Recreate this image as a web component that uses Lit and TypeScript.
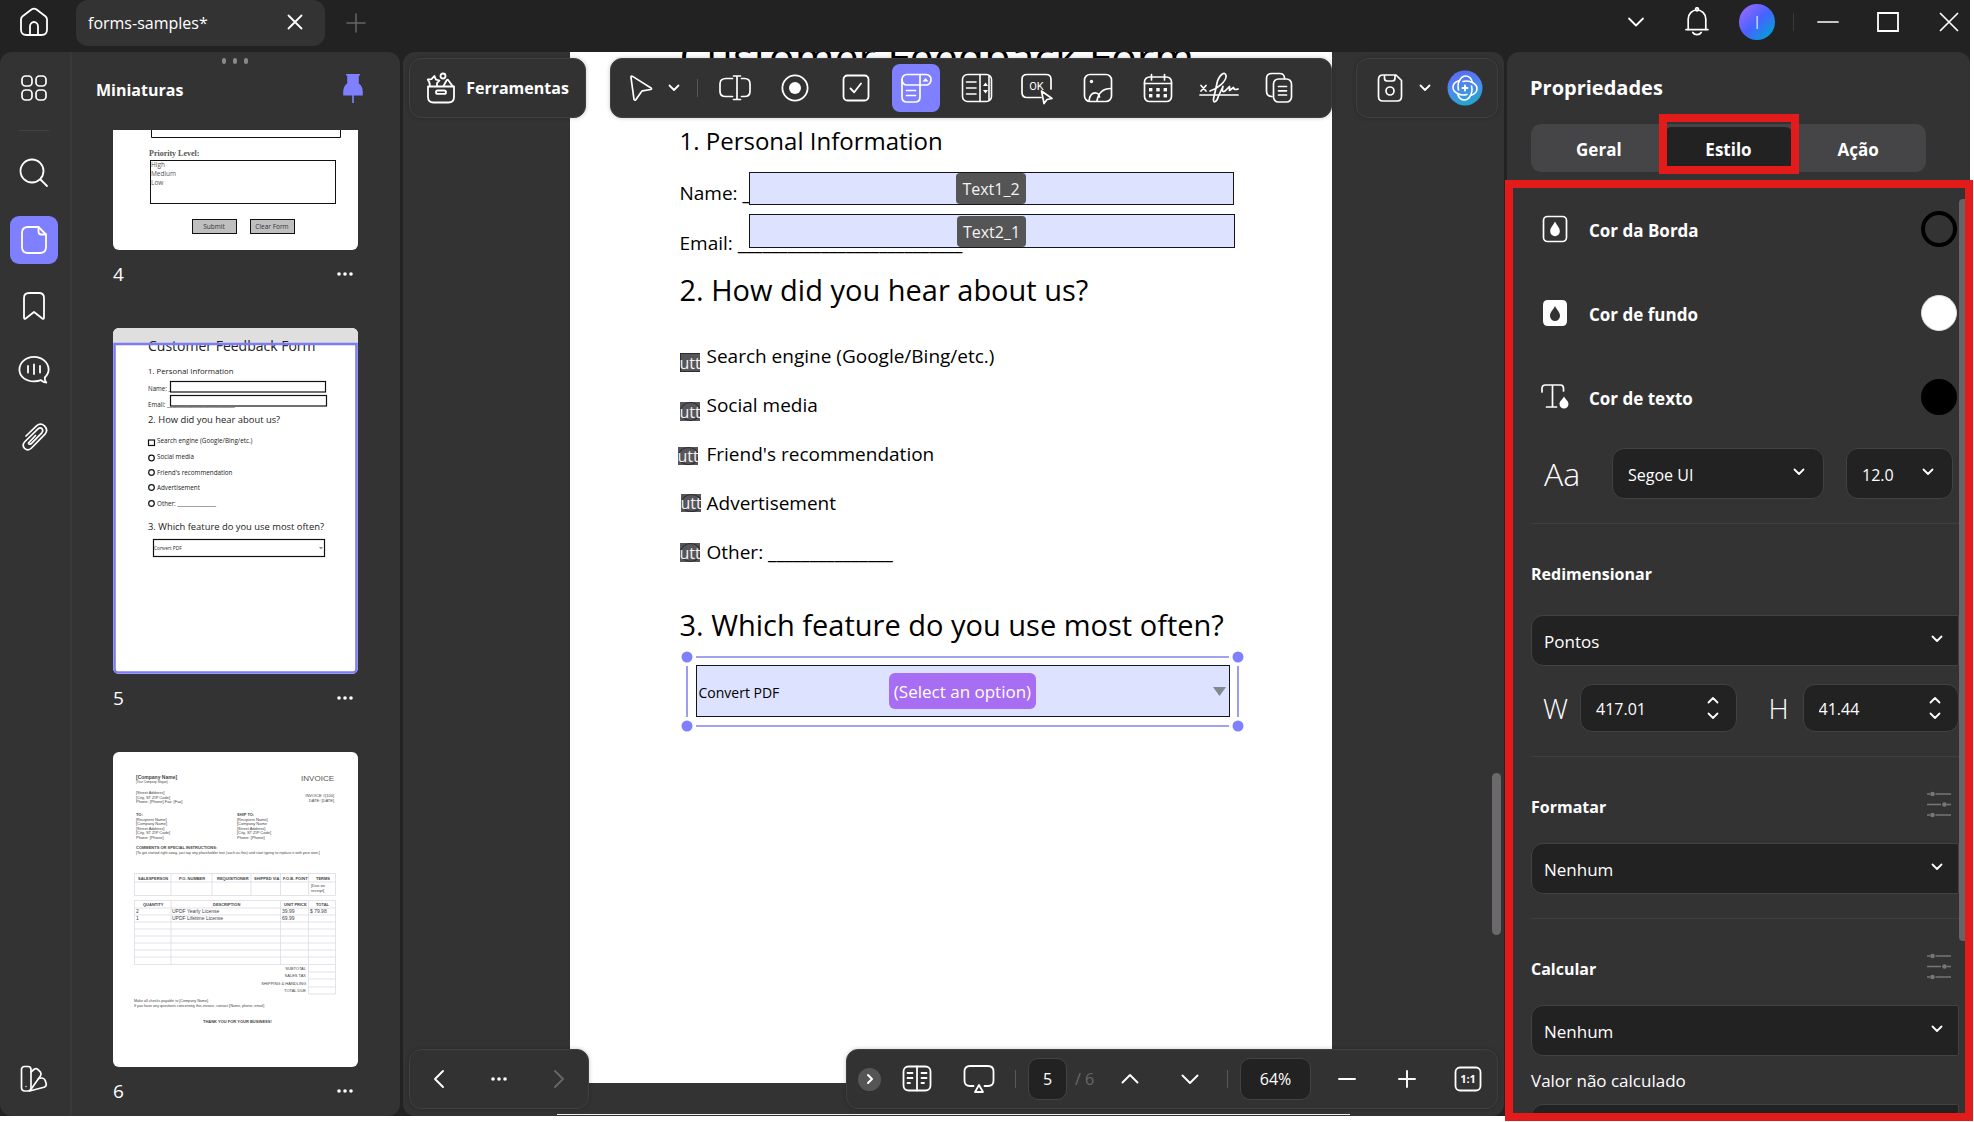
import { LitElement, html, css, svg, nothing, type TemplateResult, type SVGTemplateResult } from "lit";
import { customElement, property, state } from "lit/decorators.js";
import { classMap } from "lit/directives/class-map.js";
import { styleMap } from "lit/directives/style-map.js";

const icon = (w: number, h: number, body: SVGTemplateResult, stroke = 2) => html`<svg
  width=${w}
  height=${h}
  viewBox="0 0 ${w} ${h}"
  fill="none"
  stroke="currentColor"
  stroke-width=${stroke}
  stroke-linecap="round"
  stroke-linejoin="round"
  aria-hidden="true"
>${body}</svg>`;

const chevronDown = icon(14, 10, svg`<path d="M2.500 2.500 L7 7 L11.500 2.500"/>`, 1.8);
const chevronUp = icon(14, 10, svg`<path d="M2.500 7.500 L7 3 L11.500 7.500"/>`, 1.8);
const dots = icon(18, 6, svg`<g fill="currentColor" stroke="none"><circle cx="3" cy="3" r="1.800"/><circle cx="9" cy="3" r="1.800"/><circle cx="15" cy="3" r="1.800"/></g>`);

const icons: Record<string, TemplateResult> = {
  home: icon(30, 30, svg`<path d="M2 12.500 Q2 10.600 3.600 9.300 L12.800 2.300 Q15 .8 17.200 2.300 L26.400 9.300 Q28 10.600 28 12.500 V22.500 Q28 28 22.500 28 H7.500 Q2 28 2 22.500 Z"/><path d="M11 28 V19.500 A4 4.500 0 0 1 19 19.500 V28"/>`, 1.8),
  close: icon(16, 16, svg`<path d="M1.500 1.500 L14.500 14.500 M14.500 1.500 L1.500 14.500"/>`, 1.8),
  plus: icon(20, 20, svg`<path d="M10 1 V19 M1 10 H19"/>`, 1.5),
  chevronWide: icon(18, 12, svg`<path d="M2 2.500 L9 9.500 L16 2.500"/>`, 1.8),
  bell: icon(24, 30, svg`<path d="M3.200 22.500 V12 A8.800 9 0 0 1 20.800 12 V22.500"/><path d="M1 22.600 H23"/><circle cx="12" cy="2.300" r="1.500"/><path d="M7.800 25.500 A4.600 3.600 0 0 0 16.200 25.500"/>`, 1.7),
  minimize: icon(22, 4, svg`<path d="M1 2 H21"/>`, 1.7),
  maximize: icon(22, 20, svg`<path d="M1 1 H21 V19 H1 Z" stroke-linejoin="miter"/>`, 1.8),
  closeBig: icon(20, 20, svg`<path d="M1.500 1.500 L18.500 18.500 M18.500 1.500 L1.500 18.500"/>`, 1.7),
  grid: icon(26, 26, svg`<rect x="1" y="1" width="10" height="10" rx="3.500"/><rect x="15" y="1" width="10" height="10" rx="3.500"/><rect x="1" y="15" width="10" height="10" rx="3.500"/><rect x="15" y="15" width="10" height="10" rx="3.500"/>`, 1.7),
  search: icon(30, 30, svg`<circle cx="13" cy="13" r="11.500"/><path d="M21.500 21.500 L28 28"/>`, 1.8),
  page: icon(28, 30, svg`<path d="M8 2 H18.500 L26 9.500 V22 Q26 28 20 28 H8 Q2 28 2 22 V8 Q2 2 8 2 Z"/><path d="M18.500 2 V6.500 Q18.500 9.500 21.500 9.500 H26"/>`, 1.8),
  bookmark: icon(24, 30, svg`<path d="M2 26.500 V7 Q2 2 7 2 H17 Q22 2 22 7 V26.500 Q22 28.600 20.300 27.500 L12 21 L3.700 27.500 Q2 28.600 2 26.500 Z"/>`, 1.8),
  comment: icon(32, 30, svg`<path d="M26.800 22.500 C29.300 20.200 30.600 17.600 30.600 14.600 C30.600 7.600 24.200 1.800 16 1.800 C7.800 1.800 1.400 7.600 1.400 14.600 C1.400 21.600 7.800 26.400 16 26.400 Q20 26.400 23 25.200 Q25.500 27.300 28.300 27.600 Q26.300 25 26.800 22.500 Z"/><path d="M10 11 V17.500 M16 9.500 V19 M22 11 V17.500"/>`, 1.8),
  clip: icon(28, 30, svg`<path d="M5 14 L15.500 3.800 Q19.500 .5 23.500 3.800 Q27.500 8 24 12.200 L10.500 26 Q7 29.500 3.600 26.400 Q.5 23 4 19.500 L17 6.800 Q19.300 5 21 6.700 Q22.600 8.600 20.800 10.800 L10 21.800 Q8 23 7.500 21 L14.500 13.500" transform="translate(1 0)"/>`, 1.7),
  swatches: icon(28, 28, svg`<rect x="1.500" y="1.500" width="9.500" height="24.500" rx="3"/><path d="M11 7 L14.500 4 Q16.500 3 18 4.600 L20.500 7.200 Q21.800 9 20.400 11 L10.500 25"/><path d="M18.500 13.500 L21.500 13 Q24 12.800 25 15 L26.200 18.500 Q26.800 21.300 24 22.300 L9.500 26"/><circle cx="6" cy="21.500" r=".7" fill="currentColor" stroke="none"/>`, 1.7),
  pin: icon(22, 30, svg`<g fill="currentColor" stroke="none"><path d="M4 0 H18 V1.500 H16.800 V9.500 Q20.800 12 20.800 18 V21.500 H1.200 V18 Q1.200 12 5.200 9.500 V1.500 H4 Z"/><rect x="10.200" y="21" width="1.600" height="8"/></g>`),
  toolbox: icon(30, 32, svg`<path d="M2 14.500 H28 V25 Q28 30.500 22.500 30.500 H7.500 Q2 30.500 2 25 Z"/><rect x="10" y="18.500" width="10" height="3.400" rx="1.700"/><path d="M4 14 L3.400 10.500 L1.800 7.500 L5.500 7.200 L8.300 4 L10 7.600 L13.500 8.500 L11 11.200 L11 14"/><circle cx="17" cy="4" r="2.500"/><path d="M17.500 14 L20.500 8.500 Q21.500 7 22.500 8.500 L26.500 14"/>`, 1.8),
  cursor: icon(24, 28, svg`<path d="M2 3.500 Q1.800 1.400 3.600 2.400 L22 14 Q23.200 15 21.800 15.500 L13.500 16.800 Q12.800 17 12.400 17.700 L7 25.600 Q5.700 27 5 25.300 Z"/>`, 1.7),
  textfield: icon(34, 28, svg`<path d="M14.500 4.500 H8 Q2 4.500 2 10 V17.500 Q2 22.500 7.500 22.500 H14.500"/><path d="M23.500 4.500 H26.500 Q32 4.500 32 10 V17.500 Q32 22.500 26.500 22.500 H23.500"/><path d="M19 2 V25.500 M15.500 2 H22.500 M15.500 25.500 H22.500"/>`, 1.7),
  radio: icon(28, 28, svg`<circle cx="14" cy="14" r="12.600"/><circle cx="14" cy="14" r="6" fill="currentColor" stroke="none"/>`, 1.8),
  checkbox: icon(28, 28, svg`<rect x="1.500" y="1.500" width="25" height="25" rx="4"/><path d="M8.500 14.500 L12.200 18.300 L19 9.500"/>`, 1.8),
  dropdown: icon(32, 32, svg`<rect x="2" y="2.500" width="29" height="10.500" rx="5"/><path d="M2 7.500 V25 Q2 30 7 30 H15 Q20 30 20 25 V2.500 M6.500 18.500 H15.500 M6.500 23.500 H15.500"/><path d="M22.500 9.500 L25.500 6 L28.500 9.500 Z" fill="currentColor" stroke="none"/>`, 1.7),
  list: icon(32, 30, svg`<rect x="1.500" y="1.500" width="29" height="27" rx="5"/><path d="M19 1.500 V28.500 M5.500 9 H15 M5.500 15 H15 M5.500 21 H15 M28 3 V27"/><path d="M22 13 L24.500 9.500 L27 13 Z M22 17 L24.500 20.500 L27 17 Z" fill="currentColor" stroke="none"/>`, 1.6),
  ok: icon(34, 34, svg`<path d="M21 26.500 H7 Q2 26.500 2 21.500 V8.500 Q2 3.500 7 3.500 H26 Q31 3.500 31 8.500 V18"/><text x="16.500" y="19" font-size="11" font-weight="400" text-anchor="middle" fill="currentColor" stroke="none" font-family="Roboto, sans-serif">OK</text><path d="M21.500 20 L32 27.500 L27 28.500 L24 32.500 Z" fill="#333233"/>`, 1.7),
  image: icon(30, 30, svg`<rect x="1.500" y="1.500" width="27" height="27" rx="5.500"/><circle cx="8.500" cy="8.500" r="1.700" fill="currentColor" stroke="none"/><path d="M6 28 Q7 19.500 13 20 Q16 20.300 16.500 24 M14 28 Q16 15.500 28 15.500"/>`, 1.7),
  calendar: icon(30, 30, svg`<rect x="1.500" y="4" width="27" height="24.500" rx="5"/><path d="M1.500 10.500 H28.500 M8.500 1.500 V7 M21.500 1.500 V7"/><g fill="currentColor" stroke="none"><rect x="6" y="15" width="3.400" height="3.400"/><rect x="13.300" y="15" width="3.400" height="3.400"/><rect x="20.600" y="15" width="3.400" height="3.400"/><rect x="6" y="21" width="3.400" height="3.400"/><rect x="13.300" y="21" width="3.400" height="3.400"/><rect x="20.600" y="21" width="3.400" height="3.400"/></g>`, 1.7),
  sign: icon(40, 34, svg`<path d="M1 24 H39 M2 14.500 L7 20 M7 14.500 L2 20"/><path d="M11 20 C18 18 28 10 27 4.500 C26 0 21 3 18.500 10 L14.500 28 C14 33 18 31 19.500 25 L24 15.500 C22.500 20 24 22.500 27 19 L30.500 15.500 L30.500 19.500 L34.500 16.500 Q35 19.500 39 18"/>`, 1.7),
  copy: icon(28, 32, svg`<path d="M7 24.500 Q1.500 24.500 1.500 19 V6.500 Q1.500 1.500 7 1.500 H14.500 Q19.500 1.500 19.500 6.500"/><rect x="8.500" y="7" width="18" height="23" rx="5"/><path d="M13.500 14.500 H21.500 M13.500 18.800 H21.500 M13.500 23 H21.500"/>`, 1.7),
  save: icon(26, 30, svg`<path d="M5.500 2 H19 L24.500 7.500 V23.500 Q24.500 28 20 28 H6 Q1.500 28 1.500 23.500 V6.500 Q1.500 2 6 2 Z M7.500 2 V5 Q7.500 8 10 8 H15.500 Q18 8 18 5 V2"/><circle cx="13" cy="18" r="4"/>`, 1.7),
  arrowLeft: icon(12, 20, svg`<path d="M10 2 L2 10 L10 18"/>`, 1.9),
  arrowRight: icon(12, 20, svg`<path d="M2 2 L10 10 L2 18"/>`, 1.9),
  arrowSmall: icon(8, 12, svg`<path d="M2 2 L6 6 L2 10"/>`, 2),
  book: icon(30, 28, svg`<rect x="1.500" y="1.500" width="27" height="24" rx="5"/><path d="M15 1.500 V25.500 M5.500 8 H10.500 M5.500 13 H10.500 M5.500 18 H8 M19.500 8 H24.500 M19.500 13 H24.500 M19.500 18 H22"/>`, 1.8),
  screen: icon(32, 30, svg`<path d="M10.500 22 H7 Q1.500 22 1.500 16.500 V7.500 Q1.500 2 7 2 H25 Q30.500 2 30.500 7.500 V16.500 Q30.500 22 25 22 H21.500 M16 21 L20 28 H12 Z"/>`, 1.8),
  up: icon(18, 12, svg`<path d="M1.500 9.500 L9 2 L16.500 9.500"/>`, 1.9),
  down: icon(18, 12, svg`<path d="M1.500 2.500 L9 10 L16.500 2.500"/>`, 1.9),
  minus: icon(18, 4, svg`<path d="M1 2 H17"/>`, 1.9),
  add: icon(18, 18, svg`<path d="M9 1 V17 M1 9 H17"/>`, 1.9),
  actual: icon(28, 26, svg`<rect x="1.500" y="1.500" width="25" height="23" rx="4.500"/><text x="14" y="17" font-size="11" font-weight="700" text-anchor="middle" fill="currentColor" stroke="none" font-family="Open Sans, sans-serif">1:1</text>`, 1.8),
  borderColor: icon(26, 28, svg`<rect x="1.500" y="1.500" width="23" height="25" rx="4"/><path d="M13 6.500 C15 10.500 17.800 12.800 17.800 16.200 A4.800 5 0 0 1 8.200 16.200 C8.200 12.800 11 10.500 13 6.500 Z" fill="currentColor" stroke="none"/>`, 1.7),
  fillColor: icon(26, 28, svg`<path fill-rule="evenodd" d="M6 1 H20 Q25 1 25 6 V22 Q25 27 20 27 H6 Q1 27 1 22 V6 Q1 1 6 1 Z M13 7 C11 11 8 13.200 8 16.700 A5 5.200 0 0 0 18 16.700 C18 13.200 15 11 13 7 Z" fill="currentColor" stroke="none"/>`),
  textColor: icon(30, 28, svg`<path d="M2 9 V5.500 Q2 2 5.500 2 H20.500 Q23.500 2 23.500 5.500 V8 M12.500 2 V24 M6.500 24 H16.500"/><path d="M24 13.500 C25.500 16.500 28.500 18 28.500 21 A4.500 4.500 0 0 1 19.500 21 C19.500 18 22.500 16.500 24 13.500 Z" fill="currentColor" stroke="none"/>`, 1.7),
  sliders: icon(26, 28, svg`<path d="M1 3 H4 M9.500 3 H25 M1 13.500 H15 M21 13.500 H25 M1 24 H4 M9.500 24 H25" stroke-linecap="butt"/><g fill="currentColor" stroke="none"><circle cx="6.500" cy="3" r="2.300"/><circle cx="18.500" cy="13.500" r="2.300"/><circle cx="6.500" cy="24" r="2.300"/></g>`, 1.4),
};

const UI_FONT = css`"Open Sans", "Noto Sans", sans-serif`;

const base = css`
  * {
    box-sizing: border-box;
  }
  button,
  input,
  select {
    font: inherit;
    color: inherit;
    background: none;
    border: 0;
    margin: 0;
    padding: 0;
    outline: 0;
    appearance: none;
  }
  button {
    display: flex;
    align-items: center;
    justify-content: center;
    cursor: pointer;
  }
  svg {
    display: block;
    flex: none;
  }
`;

/* ---------- Title bar ---------- */
@customElement("title-bar")
class TitleBar extends LitElement {
  static styles = [
    base,
    css`
      :host {
        display: flex;
        height: 52px;
        background: #222;
        color: #fff;
      }
      .home {
        width: 68px;
        height: 46px;
        margin-right: 8px;
        padding-bottom: 2px;
      }
      .tab {
        display: flex;
        align-items: center;
        justify-content: space-between;
        width: 249px;
        height: 46px;
        padding: 0 22px 0 12px;
        border-radius: 12px;
        background: #343334;
        font-size: 16px;
      }
      .tab button {
        padding-bottom: 2px;
      }
      .new {
        width: 62px;
        height: 46px;
        color: #666;
      }
      .controls {
        display: flex;
        align-items: center;
        height: 44px;
        margin-left: auto;
        padding-right: 11px;
      }
      .menu {
        margin-right: 40px;
      }
      .bell {
        margin-right: 30px;
      }
      .avatar {
        width: 36px;
        height: 36px;
        border-radius: 50%;
        background: linear-gradient(135deg, #8b68ff 15%, #4763ff 50%, #00a0d8 90%);
        font-size: 18px;
        font-weight: 300;
      }
      .rule {
        width: 1px;
        height: 18px;
        margin: 0 23px 0 18px;
        background: #3a3a3a;
      }
      .min {
        margin-right: 38px;
      }
      .max {
        margin-right: 40px;
      }
    `,
  ];
  render() {
    return html`
      <button class="home" aria-label="Início">${icons.home}</button>
      <div class="tab"><span>forms-samples*</span><button aria-label="Fechar aba">${icons.close}</button></div>
      <button class="new" aria-label="Nova aba">${icons.plus}</button>
      <div class="controls">
        <button class="menu" aria-label="Mais">${icons.chevronWide}</button>
        <button class="bell" aria-label="Notificações">${icons.bell}</button>
        <button class="avatar" aria-label="Conta">I</button>
        <span class="rule"></span>
        <button class="min" aria-label="Minimizar">${icons.minimize}</button>
        <button class="max" aria-label="Maximizar">${icons.maximize}</button>
        <button aria-label="Fechar">${icons.closeBig}</button>
      </div>
    `;
  }
}

/* ---------- Page miniatures ---------- */
const thumbFour = html`<svg viewBox="0 0 245 120" width="245" height="120">
  <g fill="none" stroke="#111"><path d="M38.500 0 V7.500 H227.500 V0"/><rect x="37.500" y="30.500" width="185" height="43"/></g>
  <g fill="#c0bfc0" stroke="#111"><rect x="79.500" y="89.500" width="44" height="14"/><rect x="137.500" y="89.500" width="44" height="14"/></g>
  <g fill="#555"><text x="36" y="26" class="serif" font-size="8" font-weight="700">Priority Level:</text>
  <text x="38" y="37" font-size="6.500">High</text><text x="38" y="46" font-size="6.500">Medium</text><text x="38" y="55" font-size="6.500">Low</text></g>
  <g fill="#333" text-anchor="middle" font-size="6.500"><text x="101" y="99">Submit</text><text x="159" y="99">Clear Form</text></g>
</svg>`;

const miniOptions: [string, number][] = [
  ["Search engine (Google/Bing/etc.)", 115],
  ["Social media", 131],
  ["Friend's recommendation", 147],
  ["Advertisement", 162],
  ["Other: ______________", 178],
];

const thumbFive = html`<svg viewBox="0 0 245 346" width="245" height="346">
  <rect width="245" height="16" fill="#dfdfdf"/>
  <g fill="#222"><text x="35" y="23" font-size="14">Customer Feedback Form</text>
  <text x="35" y="46" font-size="7.800">1. Personal Information</text>
  <text x="35" y="63" font-size="6.200">Name: _</text><text x="35" y="79" font-size="6.200">Email: _________________________</text>
  <text x="35" y="95" font-size="9.400">2. How did you hear about us?</text>
  ${miniOptions.map(([t, y]) => svg`<text x="44" y=${y} font-size="6.300">${t}</text>`)}
  <text x="35" y="202" font-size="9.400">3. Which feature do you use most often?</text>
  <text x="41" y="222" font-size="4.800">Convert PDF</text></g>
  <g fill="#fff" stroke="#111" stroke-width="1.200"><rect x="57.500" y="53.500" width="155" height="10.500"/><rect x="57.500" y="67.500" width="156" height="10.500"/><rect x="35.500" y="112" width="6" height="5.500"/>
  ${[130, 144.5, 159.5, 175.5].map((y) => svg`<circle cx="38.500" cy=${y} r="2.800"/>`)}</g>
  <rect x="40.500" y="211.500" width="171" height="17" fill="none" stroke="#111" stroke-width="1.200"/>
  <path d="M206 219 H210 L208 221.500 Z" fill="#888"/>
  <path d="M1.500 16 H243.500 V341 Q243.500 344.500 240 344.500 H5 Q1.500 344.500 1.500 341 Z" fill="none" stroke="#7c7df3" stroke-width="2.600"/>
</svg>`;

type Line = [number, number, string, number?, boolean?];
const invoiceLines: Line[] = [
  [23, 27, "[Company Name]", 5, true],
  [23, 31, "[Your Company Slogan]", 3],
  [23, 42, "[Street Address]", 4], [23, 47, "[City, ST ZIP Code]", 4], [23, 51, "Phone: [Phone] Fax: [Fax]", 4],
  [23, 64, "TO:", 4, true], [23, 69, "[Recipient Name]", 4], [23, 73, "[Company Name]", 4], [23, 78, "[Street Address]", 4], [23, 82, "[City, ST ZIP Code]", 4], [23, 87, "Phone: [Phone]", 4],
  [124, 64, "SHIP TO:", 4, true], [124, 69, "[Recipient Name]", 4], [124, 73, "[Company Name", 4], [124, 78, "[Street Address]", 4], [124, 82, "[City, ST ZIP Code]", 4], [124, 87, "Phone: [Phone]", 4],
  [23, 97, "COMMENTS OR SPECIAL INSTRUCTIONS:", 4, true],
  [23, 102, "[To get started right away, just tap any placeholder text (such as this) and start typing to replace it with your own.]", 3.7],
  [25, 128, "SALESPERSON", 4, true], [66, 128, "P.O. NUMBER", 4, true], [104, 128, "REQUISITIONER", 4, true], [141, 128, "SHIPPED VIA", 4, true], [170, 128, "F.O.B. POINT", 4, true], [203, 128, "TERMS", 4, true],
  [198, 135, "[Due on", 4], [198, 140, "receipt]", 4],
  [30, 154, "QUANTITY", 4, true], [100, 154, "DESCRIPTION", 4, true], [171, 154, "UNIT PRICE", 4, true], [203, 154, "TOTAL", 4, true],
  [23, 161, "2", 5], [59, 161, "UPDF Yearly License", 5], [169, 161, "39.99", 5], [197, 161, "$ 79.98", 5],
  [23, 168, "1", 5], [59, 168, "UPDF Lifetime License", 5], [169, 168, "69.99", 5],
  [21, 250, "Make all checks payable to [Company Name]", 3.7],
  [21, 255, "If you have any questions concerning this invoice, contact [Name, phone, email]", 3.7],
  [90, 271, "THANK YOU FOR YOUR BUSINESS!", 4, true],
];

const thumbSix = html`<svg viewBox="0 0 245 315" width="245" height="315" font-family="Liberation Sans, sans-serif">
  <g fill="none" stroke="#dcdce4" stroke-width=".8">
    <rect x="21.500" y="121.500" width="201" height="22"/><path d="M21.500 130 H222.500 M58 121.500 V143.500 M99 121.500 V143.500 M138 121.500 V143.500 M167.500 121.500 V143.500 M195.500 121.500 V143.500"/>
    <rect x="21.500" y="148.500" width="201" height="64"/><path d="M58 148.500 V212.500 M167.500 148.500 V212.500 M195.500 148.500 V242 H222.500 V212.500"/>
    ${[156, 163, 170, 177, 184, 191, 198, 205].map((y) => svg`<path d="M21.500 ${y} H222.500"/>`)}
    ${[220, 227, 235].map((y) => svg`<path d="M195.500 ${y} H222.500"/>`)}
  </g>
  <g fill="#444">
    ${invoiceLines.map(([x, y, t, s = 4, b]) => svg`<text x=${x} y=${y} font-size=${s} font-weight=${b ? 700 : 400}>${t}</text>`)}
    <g text-anchor="end"><text x="221" y="29" font-size="8" fill="#555">INVOICE</text><text x="221" y="45" font-size="4">INVOICE #[100]</text><text x="221" y="50" font-size="4">DATE: [DATE]</text>
    <text x="193" y="218" font-size="4">SUBTOTAL</text><text x="193" y="225" font-size="4">SALES TAX</text><text x="193" y="233" font-size="4">SHIPPING &amp; HANDLING</text><text x="193" y="240" font-size="4">TOTAL DUE</text></g>
  </g>
</svg>`;

@customElement("thumbnail-panel")
class ThumbnailPanel extends LitElement {
  static styles = [
    base,
    css`
      :host {
        display: flex;
        min-height: 0;
        overflow: hidden;
        border-radius: 12px;
        background: #343334;
        color: #fff;
        font-size: 19px;
      }
      .rail {
        display: flex;
        flex-direction: column;
        align-items: center;
        width: 72px;
        padding: 12px 2px 13px 0;
        border-right: 2px solid #3a393a;
      }
      .rail button {
        width: 48px;
        height: 48px;
        border-radius: 9px;
        flex: none;
      }
      .rail .rule {
        width: 30px;
        height: 1px;
        margin: 18px 0;
        background: #434243;
      }
      .rail .search {
        margin-bottom: 19px;
      }
      .rail .on {
        background: #7f80ff;
        margin-bottom: 18px;
      }
      .rail .mark {
        margin-bottom: 16px;
      }
      .rail .talk {
        margin-bottom: 19px;
      }
      .rail .last {
        margin-top: auto;
      }
      .panel {
        display: flex;
        flex-direction: column;
        flex: 1;
        min-width: 0;
      }
      .grip {
        display: flex;
        justify-content: center;
        gap: 7px;
        padding: 6px 2px 8px 0;
      }
      .grip i {
        width: 4px;
        height: 6px;
        border-radius: 2px;
        background: #8a898a;
      }
      header {
        display: flex;
        align-items: center;
        justify-content: space-between;
        height: 36px;
        padding: 0 36px 0 24px;
      }
      h2 {
        margin: 0;
        font-size: 16px;
        font-weight: 700;
      }
      header button {
        color: #7f80ff;
        padding-bottom: 2px;
      }
      .list {
        flex: 1;
        min-height: 0;
        overflow: hidden;
        margin: 22px 0 0;
        padding: 0 41px;
        list-style: none;
      }
      .sheet {
        display: block;
        width: 245px;
        overflow: hidden;
        border-radius: 6px;
        background: #fff;
      }
      .first {
        border-top-left-radius: 0;
        border-top-right-radius: 0;
      }
      .serif {
        font-family: "Liberation Serif", serif;
      }
      .caption {
        display: flex;
        align-items: center;
        justify-content: space-between;
        height: 48px;
        margin-bottom: 30px;
        padding-right: 5px;
      }
    `,
  ];
  render() {
    const sheets: [number, TemplateResult][] = [[4, thumbFour], [5, thumbFive], [6, thumbSix]];
    return html`
      <nav class="rail" aria-label="Painéis">
        <button aria-label="Organizar">${icons.grid}</button>
        <span class="rule"></span>
        <button class="search" aria-label="Pesquisar">${icons.search}</button>
        <button class="on" aria-label="Miniaturas">${icons.page}</button>
        <button class="mark" aria-label="Marcadores">${icons.bookmark}</button>
        <button class="talk" aria-label="Comentários">${icons.comment}</button>
        <button aria-label="Anexos">${icons.clip}</button>
        <button class="last" aria-label="Temas">${icons.swatches}</button>
      </nav>
      <section class="panel">
        <div class="grip"><i></i><i></i><i></i></div>
        <header><h2>Miniaturas</h2><button aria-label="Fixar painel">${icons.pin}</button></header>
        <ul class="list">
          ${sheets.map(
            ([n, art]) => html`<li>
              <button class=${classMap({ sheet: true, first: n === 4 })} aria-label="Página ${n}">${art}</button>
              <div class="caption"><span>${n}</span><button aria-label="Opções da página ${n}">${dots}</button></div>
            </li>`
          )}
        </ul>
      </section>
    `;
  }
}

/* ---------- PDF page ---------- */
interface Field {
  kind: "text" | "check" | "radio";
  name: string;
  x: number;
  y: number;
  w: number;
  h: number;
}
const fields: Field[] = [
  { kind: "text", name: "Text1_2", x: 179, y: 120, w: 485, h: 33 },
  { kind: "text", name: "Text2_1", x: 179, y: 162, w: 486, h: 34 },
  { kind: "check", name: "utt", x: 110, y: 301, w: 20, h: 19 },
  { kind: "radio", name: "utt", x: 110, y: 350, w: 20, h: 19 },
  { kind: "radio", name: "utt", x: 108, y: 395, w: 20, h: 18 },
  { kind: "radio", name: "utt", x: 111, y: 442, w: 20, h: 18 },
  { kind: "radio", name: "utt", x: 110, y: 491, w: 20, h: 19 },
];

@customElement("pdf-page")
class PdfPage extends LitElement {
  static styles = [
    base,
    css`
      :host {
        display: block;
        position: relative;
        width: 762px;
        height: 1031px;
        padding-left: 110px;
        overflow: hidden;
        background: #fff;
        color: #000;
        white-space: nowrap;
        font-size: 19px;
      }
      h1,
      h2,
      h3,
      p {
        margin: 0;
        font-weight: 400;
      }
      h1 {
        margin-top: -28px;
        font-size: 43px;
        line-height: 66px;
      }
      h2 {
        margin-top: 35px;
        font-size: 24px;
        line-height: 32px;
      }
      .line {
        margin-top: 22px;
        line-height: 28px;
      }
      h3 {
        margin-top: 13px;
        font-size: 29px;
        line-height: 40px;
      }
      .options {
        margin: 22px 0 28px;
        padding: 0 0 0 27px;
        list-style: none;
        line-height: 49px;
      }
      .field {
        position: absolute;
        display: grid;
        place-items: center;
        overflow: hidden;
      }
      .field > * {
        grid-area: 1 / 1;
      }
      .field input {
        width: 100%;
        height: 100%;
      }
      .text input {
        border: 1px solid #14141c;
        background: #dde3ff;
      }
      .tag {
        padding: 2px 6px 0;
        border-radius: 4px;
        background: #555556;
        color: #f2f2f2;
        font-size: 16px;
        line-height: 29px;
        pointer-events: none;
      }
      .check,
      .radio {
        background: #56565a;
        color: #fff;
        font-size: 14px;
      }
      .check input {
        border: 1px solid #2c2c30;
      }
      .radio input {
        border: 1px solid #2c2c30;
        border-radius: 50%;
      }
      .check .tag,
      .radio .tag {
        padding: 0;
        background: none;
        line-height: 18px;
      }
      .selection {
        position: absolute;
        left: 117px;
        top: 605px;
        width: 551px;
        height: 69px;
      }
      .frame {
        position: absolute;
        inset: -6px;
      }
      .combo {
        position: absolute;
        inset: 8px 8px 9px 9px;
        display: grid;
        align-items: center;
        background: #dde3ff;
        border: 1px solid #14141c;
      }
      .combo > * {
        grid-area: 1 / 1;
      }
      .combo select {
        width: 100%;
        height: 100%;
        padding: 3px 0 0 2px;
        font-size: 14px;
      }
      .combo .label {
        justify-self: center;
        padding: 2px 5px 0;
        border-radius: 6px;
        background: #a76df2;
        color: #fff;
        font-size: 17px;
        line-height: 34px;
        pointer-events: none;
      }
      .combo .arrow {
        justify-self: end;
        margin-right: 3px;
        pointer-events: none;
      }
    `,
  ];
  render() {
    return html`
      <h1>Customer Feedback Form</h1>
      <h2>1. Personal Information</h2>
      <p class="line">Name: __________________</p>
      <p class="line">Email: ___________________________</p>
      <h3>2. How did you hear about us?</h3>
      <ul class="options">
        <li>Search engine (Google/Bing/etc.)</li>
        <li>Social media</li>
        <li>Friend's recommendation</li>
        <li>Advertisement</li>
        <li>Other: _______________</li>
      </ul>
      <h3>3. Which feature do you use most often?</h3>
      ${fields.map(
        (f) => html`<label
          class=${classMap({ field: true, [f.kind]: true })}
          style=${styleMap({ left: `${f.x}px`, top: `${f.y}px`, width: `${f.w}px`, height: `${f.h}px` })}
        >
          <input type=${f.kind === "check" ? "checkbox" : f.kind} name="source" /><span class="tag">${f.name}</span>
        </label>`
      )}
      <div class="selection">
        <div class="combo">
          <select id="feature" aria-label="Recurso"><option>Convert PDF</option></select>
          <label class="label" for="feature">(Select an option)</label>
          <svg class="arrow" width="13" height="9" viewBox="0 0 13 9"><path d="M0 0 H13 L6.500 9 Z" fill="#808890"/></svg>
        </div>
        <svg class="frame" width="563" height="81" viewBox="0 0 563 81" fill="none" pointer-events="none">
          <path d="M15 6 H548 M15 75 H548 M6 15 V66 M557 15 V66" stroke="#8485e8" stroke-width="1.600"/>
          <g fill="#7f80ff"><circle cx="6" cy="6" r="5.500"/><circle cx="557" cy="6" r="5.500"/><circle cx="6" cy="75" r="5.500"/><circle cx="557" cy="75" r="5.500"/></g>
        </svg>
      </div>
    `;
  }
}

/* ---------- Document viewer ---------- */
const tools: [string, string][] = [
  ["textfield", "Campo de texto"],
  ["radio", "Botão de opção"],
  ["checkbox", "Caixa de seleção"],
  ["dropdown", "Lista suspensa"],
  ["list", "Caixa de listagem"],
  ["ok", "Botão"],
  ["image", "Imagem"],
  ["calendar", "Data"],
  ["sign", "Assinatura"],
  ["copy", "Duplicar"],
];

@customElement("document-viewer")
class DocumentViewer extends LitElement {
  @state() tool = "dropdown";
  static styles = [
    base,
    css`
      :host {
        position: relative;
        display: flex;
        justify-content: center;
        min-width: 0;
        overflow: hidden;
        border-radius: 12px;
        background: #343334;
        color: #fff;
      }
      pdf-page {
        flex: none;
        margin-right: 6px;
      }
      .bar {
        position: absolute;
        left: 6px;
        right: 6px;
        display: flex;
        gap: 24px;
      }
      .top {
        top: 6px;
      }
      .bottom {
        bottom: 7px;
        justify-content: space-between;
      }
      .group {
        display: flex;
        align-items: center;
        height: 60px;
        border: 1px solid #414041;
        border-radius: 12px;
        background: #333233;
        box-shadow: 0 0 4px rgb(0 0 0 / 22%);
      }
      .tools-button {
        gap: 10px;
        width: 177px;
        font-size: 16px;
        font-weight: 700;
      }
      .tools {
        flex: 1;
        justify-content: space-between;
        padding: 0 28px 0 18px;
      }
      .pick {
        display: flex;
        align-items: center;
        gap: 14px;
        margin-right: 4px;
      }
      .rule {
        width: 1px;
        height: 18px;
        background: #5a595a;
      }
      .tool {
        width: 48px;
        height: 48px;
        border-radius: 8px;
      }
      .tool.on {
        background: #7f80ff;
      }
      .export {
        gap: 15px;
        padding: 0 14px 0 20px;
      }
      .pages {
        width: 180px;
        justify-content: space-between;
        padding: 0 23px;
      }
      .off {
        color: #666;
      }
      .nav {
        width: 652px;
        padding: 0 15px 0 11px;
        font-size: 16px;
      }
      .expand {
        width: 23px;
        height: 23px;
        margin-right: 21px;
        border-radius: 50%;
        background: #565556;
      }
      .nav .book {
        margin-right: 31px;
      }
      .nav .rule.a {
        margin: 0 12px 0 20px;
      }
      .box {
        height: 42px;
        border: 1px solid #444344;
        border-radius: 10px;
        background: #232223;
        text-align: center;
      }
      .page-box {
        width: 39px;
      }
      .total {
        width: 54px;
        padding-left: 8px;
        color: #686768;
      }
      .nav .up {
        margin-right: 42px;
      }
      .nav .rule.b {
        margin: 0 12px 0 28px;
      }
      .zoom-box {
        width: 71px;
        margin-right: 27px;
      }
      .nav .minus {
        margin-right: 42px;
      }
      .nav .actual {
        margin-left: auto;
      }
      .thumb {
        position: absolute;
        top: 721px;
        right: 3px;
        width: 9px;
        height: 162px;
        border-radius: 5px;
        background: #6b696b;
      }
      .hbar {
        position: absolute;
        bottom: 1px;
        left: 14%;
        right: 14%;
        height: 1px;
        background: #eee;
      }
    `,
  ];
  render() {
    return html`
      <pdf-page></pdf-page>
      <div class="bar top">
        <button class="group tools-button">${icons.toolbox}Ferramentas</button>
        <div class="group tools" role="toolbar" aria-label="Formulário">
          <div class="pick">
            <button aria-label="Selecionar">${icons.cursor}</button>
            <button aria-label="Modos de seleção">${chevronDown}</button>
          </div>
          <span class="rule"></span>
          ${tools.map(
            ([id, label]) => html`<button
              class=${classMap({ tool: true, on: id === this.tool })}
              aria-label=${label}
              @click=${() => (this.tool = id)}
            >${icons[id]}</button>`
          )}
        </div>
        <div class="group export">
          <button aria-label="Salvar">${icons.save}</button>
          <button aria-label="Opções de salvar">${chevronDown}</button>
          <button aria-label="Assistente de IA">
            <svg width="36" height="36" viewBox="0 0 36 36" fill="none">
              <defs><linearGradient id="ai" x1=".3" y1="0" x2=".6" y2="1"><stop offset="0" stop-color="#5c68f2"/><stop offset=".5" stop-color="#4a8cf0"/><stop offset="1" stop-color="#22a6cc"/></linearGradient></defs>
              <circle cx="18" cy="18" r="17.500" fill="url(#ai)"/>
              <g stroke="#fff" stroke-width="1.600" stroke-linecap="round">
                ${[0, 90, 180, 270].map((a) => svg`<path transform="rotate(${a} 18 18)" d="M11.500 20 C9.500 12 14.500 6 18.500 6 C22 6 24.500 8.500 25.500 12.500"/>`)}
              </g>
              <path d="M18 15.500 V20.500 M15.500 18 H20.500" stroke="#fff" stroke-width="2" stroke-linecap="round"/>
            </svg>
          </button>
        </div>
      </div>
      <span class="thumb"></span>
      <div class="bar bottom">
        <div class="group pages">
          <button aria-label="Voltar">${icons.arrowLeft}</button>
          <button aria-label="Mais">${dots}</button>
          <button class="off" aria-label="Avançar">${icons.arrowRight}</button>
        </div>
        <div class="group nav">
          <button class="expand" aria-label="Recolher">${icons.arrowSmall}</button>
          <button class="book" aria-label="Exibição de página">${icons.book}</button>
          <button aria-label="Apresentação">${icons.screen}</button>
          <span class="rule a"></span>
          <input class="box page-box" aria-label="Página" value="5" />
          <span class="total">/ 6</span>
          <button class="up" aria-label="Página anterior">${icons.up}</button>
          <button aria-label="Próxima página">${icons.down}</button>
          <span class="rule b"></span>
          <input class="box zoom-box" aria-label="Zoom" value="64%" />
          <button class="minus" aria-label="Reduzir">${icons.minus}</button>
          <button aria-label="Ampliar">${icons.add}</button>
          <button class="actual" aria-label="Tamanho real">${icons.actual}</button>
        </div>
      </div>
      <span class="hbar"></span>
    `;
  }
}

/* ---------- Properties panel ---------- */
@customElement("properties-panel")
class PropertiesPanel extends LitElement {
  @property() tab = "Estilo";
  static styles = [
    base,
    css`
      :host {
        position: relative;
        display: flex;
        flex-direction: column;
        min-height: 0;
        border-radius: 12px;
        background: #343334;
        color: #fff;
        font-size: 16px;
      }
      h2,
      h3,
      p {
        margin: 0;
      }
      h2 {
        padding: 20px 23px;
        font-size: 20px;
        line-height: 32px;
      }
      .tabs {
        position: relative;
        display: grid;
        grid-template-columns: repeat(3, 1fr);
        width: 395px;
        height: 48px;
        margin: 0 24px;
        padding: 3px;
        border-radius: 10px;
        background: #454446;
      }
      .tabs button {
        padding-top: 3px;
        border-radius: 8px;
        font-size: 17px;
        font-weight: 700;
      }
      .tabs .on {
        background: #232223;
      }
      .mark {
        position: absolute;
        border: 8px solid #e31b1b;
        pointer-events: none;
      }
      .tabs .mark {
        inset: -10px 127px -2px 128px;
      }
      .mark.large {
        inset: 128px -3px -5px -2px;
      }
      .scroll {
        flex: 1;
        min-height: 0;
        overflow: hidden;
        margin-top: 15px;
        padding: 0 11px 0 24px;
      }
      .color {
        display: grid;
        grid-template-columns: 30px 1fr 36px;
        align-items: center;
        gap: 19px;
        height: 84px;
        padding: 0 2px 0 9px;
        font-size: 17px;
        font-weight: 700;
      }
      .color > svg {
        justify-self: center;
      }
      .color > span {
        padding-top: 3px;
      }
      .swatch {
        width: 36px;
        height: 36px;
        border: 4px solid #000;
        border-radius: 50%;
      }
      .swatch.white {
        border: 1px solid #ddd;
        background: #fff;
      }
      .swatch.black {
        background: #000;
      }
      .row {
        display: flex;
        align-items: center;
      }
      .fontrow {
        margin-top: 9px;
        padding: 0 6px 0 13px;
      }
      .glyph {
        font-size: 28px;
        font-weight: 300;
        line-height: 48px;
      }
      .fontrow .glyph {
        width: 68px;
        font-size: 32px;
      }
      .select {
        display: grid;
        align-items: center;
        height: 51px;
        border: 1px solid #434243;
        border-radius: 12px;
        background: #232223;
      }
      .select > * {
        grid-area: 1 / 1;
      }
      .select select,
      .number input {
        width: 100%;
        height: 100%;
        min-width: 0;
        padding: 2px 12px 0;
      }
      .select svg {
        justify-self: end;
        margin: 0 17px 4px 0;
        pointer-events: none;
      }
      .wide {
        border-top-right-radius: 2px;
        border-bottom-right-radius: 2px;
        font-size: 17px;
      }
      .select.wide svg {
        margin-right: 14px;
      }
      .family {
        flex: 1;
        margin-right: 22px;
      }
      .size {
        width: 107px;
      }
      .fontrow select {
        padding-left: 15px;
      }
      hr {
        height: 1px;
        margin: 24px 0;
        border: 0;
        background: #3f3e3f;
      }
      .head {
        display: flex;
        align-items: center;
        justify-content: space-between;
        height: 52px;
        margin-bottom: 15px;
        padding-right: 7px;
      }
      .head.tuned {
        margin-bottom: 10px;
      }
      .head h3 {
        font-size: 16px;
        font-weight: 700;
      }
      .head button {
        color: #777;
        margin-bottom: 4px;
      }
      .dims {
        margin: 18px 0 24px;
        padding-left: 12px;
      }
      .dims .glyph {
        width: 37px;
      }
      .dims .glyph.h {
        width: 34px;
        margin-left: 32px;
      }
      .number {
        display: flex;
        flex: 1;
        height: 48px;
        border: 1px solid #434243;
        border-radius: 12px;
        background: #232223;
      }
      .number input {
        padding-left: 15px;
      }
      .spin {
        display: flex;
        flex-direction: column;
        justify-content: center;
        gap: 6px;
        padding-right: 16px;
      }
      .note {
        margin: 12px 0 10px;
        font-size: 17px;
        line-height: 26px;
      }
      .bar {
        position: absolute;
        top: 147px;
        right: 5px;
        width: 6px;
        height: 742px;
        border-radius: 4px 0 0 4px;
        background: #666466;
      }
    `,
  ];

  private select(id: string, value: string, kind: string, label: string) {
    return html`<div class="select ${kind}"><select id=${id} aria-label=${label}><option>${value}</option></select>${chevronDown}</div>`;
  }
  private number(id: string, glyph: string, value: string) {
    return html`<label class=${classMap({ glyph: true, h: glyph === "H" })} for=${id}>${glyph}</label>
      <div class="number">
        <input id=${id} value=${value} />
        <div class="spin"><button aria-label="Aumentar ${glyph}">${chevronUp}</button><button aria-label="Diminuir ${glyph}">${chevronDown}</button></div>
      </div>`;
  }
  private head(title: string, tuned = true) {
    return html`<div class=${classMap({ head: true, tuned })}><h3>${title}</h3>${tuned ? html`<button aria-label="Ajustar ${title}">${icons.sliders}</button>` : nothing}</div>`;
  }

  render() {
    const colors: [string, string, string][] = [
      ["borderColor", "Cor da Borda", "ring"],
      ["fillColor", "Cor de fundo", "white"],
      ["textColor", "Cor de texto", "black"],
    ];
    return html`
      <h2>Propriedades</h2>
      <div class="tabs" role="tablist">
        ${["Geral", "Estilo", "Ação"].map(
          (t) => html`<button role="tab" aria-selected=${t === this.tab} class=${classMap({ on: t === this.tab })} @click=${() => (this.tab = t)}>${t}</button>`
        )}
        <span class="mark"></span>
      </div>
      <div class="scroll">
        ${colors.map(
          ([ic, label, tone]) => html`<div class="color">${icons[ic]}<span>${label}</span><button class="swatch ${tone}" aria-label=${label}></button></div>`
        )}
        <div class="row fontrow">
          <span class="glyph">Aa</span>
          ${this.select("family", "Segoe UI", "family", "Fonte")} ${this.select("size", "12.0", "size", "Tamanho")}
        </div>
        <hr />
        ${this.head("Redimensionar", false)} ${this.select("unit", "Pontos", "wide", "Unidade")}
        <div class="row dims">${this.number("w", "W", "417.01")} ${this.number("h", "H", "41.44")}</div>
        <hr />
        ${this.head("Formatar")} ${this.select("format", "Nenhum", "wide", "Formatar")}
        <hr />
        ${this.head("Calcular")} ${this.select("calc", "Nenhum", "wide", "Calcular")}
        <p class="note">Valor não calculado</p>
        ${this.select("value", "", "wide", "Valor")}
      </div>
      <span class="bar"></span>
      <span class="mark large"></span>
    `;
  }
}

@customElement("app-root")
class AppRoot extends LitElement {
  static styles = css`
    :host {
      display: flex;
      flex-direction: column;
      box-sizing: border-box;
      height: 100vh;
      padding: 0 4px 6px 0;
      background: #fff;
      font-family: ${UI_FONT};
    }
    .work {
      display: grid;
      grid-template-columns: 400px minmax(0, 1fr) 463px;
      grid-template-rows: minmax(0, 1fr);
      gap: 3px;
      flex: 1;
      min-height: 0;
      background: #222;
    }
  `;
  render() {
    return html`
      <title-bar></title-bar>
      <div class="work">
        <thumbnail-panel></thumbnail-panel>
        <document-viewer></document-viewer>
        <properties-panel></properties-panel>
      </div>
    `;
  }
}
